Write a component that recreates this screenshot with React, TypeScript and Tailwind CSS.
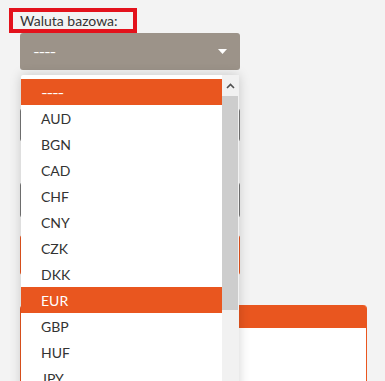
const currencies = ["----", "AUD", "BGN", "CAD", "CHF", "CNY", "CZK", "DKK", "EUR", "GBP", "HUF", "JPY"];

const CurrencyOption = ({ code, active }: { code: string; active: boolean }) => (
  <div
    className={`h-[26px] flex items-center pl-[20px] text-[14px] ${
      active ? "bg-[#e9561f] text-white" : "text-[#333]"
    }`}
  >
    <span className={code === "----" ? "inline-block tracking-[-1px] scale-x-[1.3] origin-left" : ""}>{code}</span>
  </div>
);

export default function App() {
  return (
    <div
      className="relative w-[385px] h-[381px] overflow-hidden bg-[#f3f3f3]"
      style={{ fontFamily: "Lato, 'Open Sans', sans-serif" }}
    >
      {/* page behind the open select */}
      <div className="flex flex-col pt-[8px]">
        <div className="ml-[9px] w-[128px] h-[25px] border-[4px] border-[#e3121c] pl-[7px] text-[14px] leading-[17px] text-[#333]">
          Waluta bazowa:
        </div>
        <div className="ml-[20px] w-[220px] h-[37px] rounded-[3px] bg-[#9c9389] flex items-center justify-between pl-[13px] pr-[13px] text-[14px] text-white">
          <span className="inline-block tracking-[-1px] scale-x-[1.3] origin-left">----</span>
          <svg width="9" height="5" viewBox="0 0 9 5">
            <path d="M0 0h9L4.5 5z" fill="#fff" />
          </svg>
        </div>
        <div className="ml-[20px] mt-[38px] w-[220px] h-[34px] rounded-[3px] border border-[#777] bg-white" />
        <div className="ml-[20px] mt-[40px] w-[220px] h-[36px] rounded-[3px] border border-[#777] bg-white" />
        <div className="ml-[20px] mt-[17px] w-[220px] h-[40px] rounded-[3px] bg-[#e9561f]" />
        <div className="ml-[20px] mt-[30px] w-[347px] rounded-t-[4px] border-x border-[#e9561f] bg-white h-[120px]">
          <div className="h-[23px] bg-[#e9561f] rounded-t-[3px]" />
        </div>
      </div>

      {/* open dropdown list */}
      <div className="absolute left-[21px] top-[75px] w-[218px] h-[330px] bg-white rounded-t-[2px] shadow-[0_0_12px_rgba(0,0,0,0.18)] flex">
        <div className="flex-1 pt-[4px]">
          {currencies.map((c) => (
            <CurrencyOption key={c} code={c} active={c === "----" || c === "EUR"} />
          ))}
        </div>
        <div className="w-[17px] flex flex-col bg-[#f1f1f1] pr-[1px]">
          <div className="h-[21px] flex items-center justify-center">
            <svg width="9" height="6" viewBox="0 0 9 6">
              <path d="M1 5l3.5-3.5L8 5" stroke="#505050" strokeWidth="1.6" fill="none" />
            </svg>
          </div>
          <div className="h-[214px] bg-[#cdcdcd]" />
        </div>
      </div>
    </div>
  );
}
